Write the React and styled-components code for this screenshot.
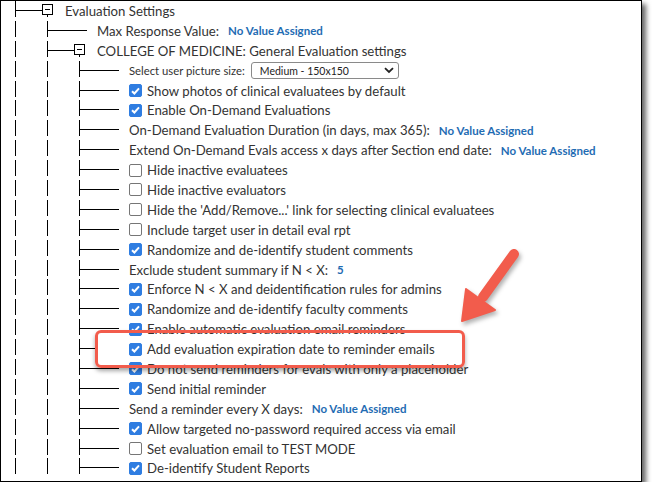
import React from 'react';
import styled, { createGlobalStyle } from 'styled-components';

const GlobalStyle = createGlobalStyle`
  html, body {
    margin: 0;
    padding: 0;
    background: #fff;
  }
  body {
    font-family: Lato, "Noto Sans", sans-serif;
    color: #333;
  }
`;

const STEP = 32;
const FIRST = 14;

const line = (x, y, w, h) =>
  `linear-gradient(#000, #000) ${x}px ${y}px / ${w}px ${h}px no-repeat`;

// vertical guides for every ancestor, plus the elbow into this row
const guides = ({ $depth, $reach }) => {
  const layers = [];
  for (let i = 0; i < $depth; i += 1) {
    layers.push(line(FIRST + STEP * i, 0, 1, 16));
  }
  const x = FIRST + STEP * ($depth - 1);
  layers.push(line(x, 9, $reach, 1));
  return layers.join(', ');
};

const Frame = styled.div`
  position: relative;
  box-sizing: border-box;
  width: 642px;
  height: 482px;
  border: 1px solid #000;
  background: #fff;
  box-shadow: 4px 4px 5px rgba(0, 0, 0, 0.6);
  overflow: hidden;
`;

const Tree = styled.div`
  display: flex;
  flex-direction: column;
`;

const Row = styled.div`
  display: flex;
  align-items: center;
  height: 19.9px;
  white-space: nowrap;
`;

const Indent = styled.span`
  flex: none;
  align-self: stretch;
  width: ${({ $width }) => $width}px;
  background: ${guides};
`;

const Expander = styled.span`
  position: relative;
  flex: none;
  align-self: flex-start;
  box-sizing: border-box;
  width: 11px;
  height: 11px;
  margin: 3px 12px 0 0;
  border: 1px solid #000;
  background: #fff;

  &::before {
    content: '';
    position: absolute;
    left: 2px;
    right: 2px;
    top: 4px;
    height: 1px;
    background: #000;
  }

  &::after {
    content: '';
    position: absolute;
    left: 4px;
    top: 100%;
    width: 1px;
    height: 3px;
    background: #000;
  }
`;

const Check = styled.span`
  flex: none;
  display: inline-flex;
  align-items: center;
  justify-content: center;
  box-sizing: border-box;
  width: 13px;
  height: 13px;
  margin-right: 5px;
  border-radius: 2px;
  border: 1px solid ${({ $on }) => ($on ? '#2f7de1' : '#767676')};
  background: ${({ $on }) => ($on ? '#2f7de1' : '#fff')};
`;

const Label = styled.span`
  font-size: ${({ $small }) => ($small ? '11.3px' : '13.2px')};
`;

const Value = styled.span`
  margin-left: 9px;
  font-size: 11.5px;
  font-weight: 700;
  color: #1f6cb3;
`;

const Select = styled.span`
  display: flex;
  align-items: center;
  justify-content: space-between;
  box-sizing: border-box;
  width: 148px;
  height: 17px;
  margin-left: 6px;
  padding: 0 4px 0 8px;
  border: 1px solid #8a8a8a;
  border-radius: 3px;
  font-size: 10.5px;
  color: #222;
`;

const Callout = styled.div`
  position: absolute;
  left: 94px;
  top: 329px;
  width: 370px;
  height: 38px;
  box-sizing: border-box;
  border: 3px solid #f25c4c;
  border-radius: 6px;
  box-shadow: 0 3px 4px rgba(0, 0, 0, 0.35);
  pointer-events: none;
`;

const Arrow = styled.svg`
  position: absolute;
  left: 0;
  top: 0;
  overflow: visible;
  filter: drop-shadow(2px 3px 2px rgba(0, 0, 0, 0.3));
  pointer-events: none;
`;

const Tick = () => (
  <svg width="9" height="8" viewBox="0 0 9 8">
    <path d="M1 4.2 L3.4 6.5 L8 1.3" fill="none" stroke="#fff" strokeWidth="2" />
  </svg>
);

const Chevron = () => (
  <svg width="10" height="7" viewBox="0 0 10 7">
    <path d="M1 1.2 L5 5 L9 1.2" fill="none" stroke="#222" strokeWidth="1.8" />
  </svg>
);

const VALUE = 'No Value Assigned';

const rows = [
  { depth: 1, open: true, text: 'Evaluation Settings' },
  { depth: 2, text: 'Max Response Value:', value: VALUE },
  { depth: 2, open: true, text: 'COLLEGE OF MEDICINE: General Evaluation settings' },
  { depth: 3, text: 'Select user picture size:', small: true, select: 'Medium - 150x150' },
  { depth: 3, check: true, text: 'Show photos of clinical evaluatees by default' },
  { depth: 3, check: true, text: 'Enable On-Demand Evaluations' },
  { depth: 3, text: 'On-Demand Evaluation Duration (in days, max 365):', value: VALUE },
  { depth: 3, text: 'Extend On-Demand Evals access x days after Section end date:', value: VALUE },
  { depth: 3, check: false, text: 'Hide inactive evaluatees' },
  { depth: 3, check: false, text: 'Hide inactive evaluators' },
  { depth: 3, check: false, text: "Hide the 'Add/Remove...' link for selecting clinical evaluatees" },
  { depth: 3, check: false, text: 'Include target user in detail eval rpt' },
  { depth: 3, check: true, text: 'Randomize and de-identify student comments' },
  { depth: 3, text: 'Exclude student summary if N < X:', value: '5' },
  { depth: 3, check: true, text: 'Enforce N < X and deidentification rules for admins' },
  { depth: 3, check: true, text: 'Randomize and de-identify faculty comments' },
  { depth: 3, check: true, text: 'Enable automatic evaluation email reminders' },
  { depth: 3, check: true, text: 'Add evaluation expiration date to reminder emails', boxed: true },
  { depth: 3, check: true, text: 'Do not send reminders for evals with only a placeholder' },
  { depth: 3, check: true, text: 'Send initial reminder' },
  { depth: 3, text: 'Send a reminder every X days:', value: VALUE },
  { depth: 3, check: true, text: 'Allow targeted no-password required access via email' },
  { depth: 3, check: false, text: 'Set evaluation email to TEST MODE' },
  { depth: 3, check: true, text: 'De-identify Student Reports' },
];

const TreeRow = ({ row }) => {
  const base = FIRST + STEP * (row.depth - 1);
  const width = row.open ? base + 27 : base + 50;
  let reach = row.open ? 27 : 40;
  if (row.boxed) reach = 16;

  return (
    <Row>
      <Indent $width={width} $depth={row.depth} $reach={reach} />
      {row.open && <Expander />}
      {row.check !== undefined && (
        <Check $on={row.check}>{row.check && <Tick />}</Check>
      )}
      <Label $small={row.small}>{row.text}</Label>
      {row.value && <Value>{row.value}</Value>}
      {row.select && (
        <Select>
          {row.select}
          <Chevron />
        </Select>
      )}
    </Row>
  );
};

export default function App() {
  return (
    <>
      <GlobalStyle />
      <Frame>
        <Tree>
          {rows.map((row) => (
            <TreeRow key={row.text} row={row} />
          ))}
        </Tree>
        <Callout />
        <Arrow width="1" height="1">
          <line x1="513" y1="253" x2="482" y2="296" stroke="#f25c4c" strokeWidth="10" strokeLinecap="round" />
          <polygon points="461,320 465,288 494,309" fill="#f25c4c" stroke="#f25c4c" strokeWidth="2" strokeLinejoin="round" />
        </Arrow>
      </Frame>
    </>
  );
}
